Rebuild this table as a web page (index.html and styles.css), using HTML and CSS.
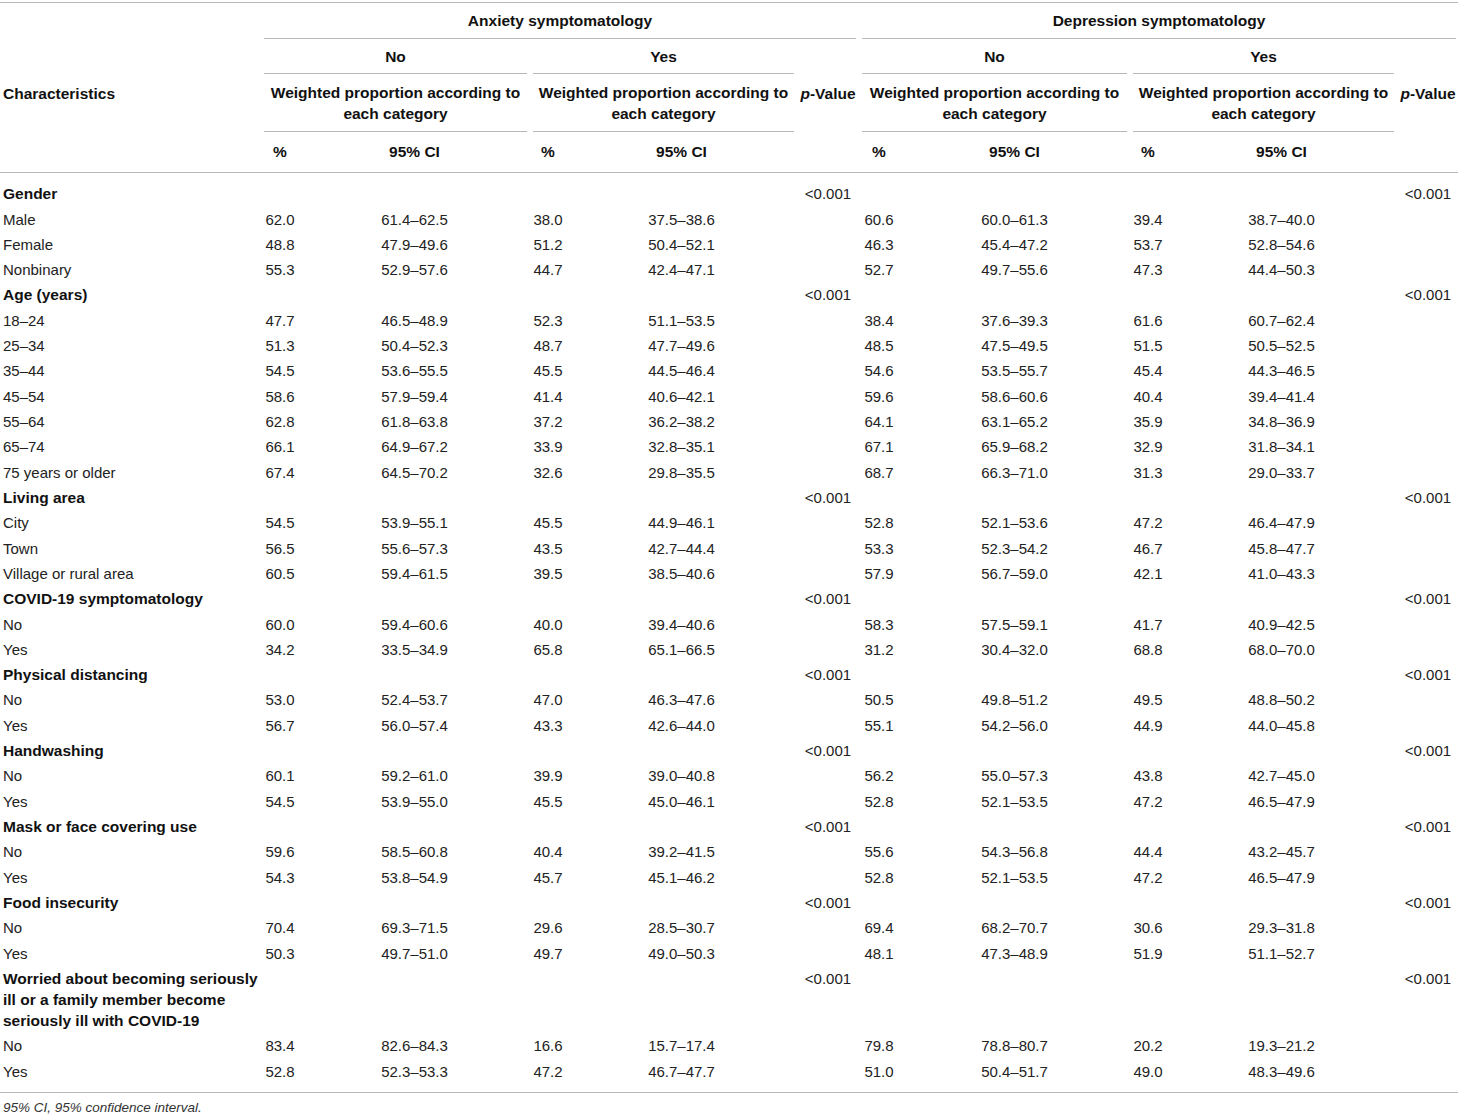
FILE: index.html
```html
<!DOCTYPE html>
<html lang="en">
<head>
<meta charset="utf-8">
<title>Table</title>
<link rel="stylesheet" href="styles.css">
</head>
<body>
<div class="wrap">
<table class="data">
<colgroup>
<col class="c-lab">
<col class="c-pct"><col class="c-ci">
<col class="c-pct2"><col class="c-ci">
<col class="c-p">
<col class="c-pct3"><col class="c-ci">
<col class="c-pct2"><col class="c-ci">
<col class="c-p">
</colgroup>
<thead>
<tr class="h1">
<th rowspan="4" class="char">Characteristics</th>
<th colspan="5" class="rule">Anxiety symptomatology</th>
<th colspan="5" class="rule">Depression symptomatology</th>
</tr>
<tr class="h2">
<th colspan="2" class="rule">No</th>
<th colspan="2" class="rule">Yes</th>
<th rowspan="3" class="pv"><i>p</i>-Value</th>
<th colspan="2" class="rule">No</th>
<th colspan="2" class="rule">Yes</th>
<th rowspan="3" class="pv"><i>p</i>-Value</th>
</tr>
<tr class="h3">
<th colspan="2" class="rule">Weighted proportion according to each category</th>
<th colspan="2" class="rule">Weighted proportion according to each category</th>
<th colspan="2" class="rule">Weighted proportion according to each category</th>
<th colspan="2" class="rule">Weighted proportion according to each category</th>
</tr>
<tr class="h4">
<th>%</th><th>95% CI</th><th>%</th><th>95% CI</th>
<th>%</th><th>95% CI</th><th>%</th><th>95% CI</th>
</tr>
</thead>
<tbody>
<tr class="grp"><td class="lab">Gender</td><td></td><td></td><td></td><td></td><td>&lt;0.001</td><td></td><td></td><td></td><td></td><td>&lt;0.001</td></tr>
<tr><td class="lab">Male</td><td>62.0</td><td>61.4–62.5</td><td>38.0</td><td>37.5–38.6</td><td></td><td>60.6</td><td>60.0–61.3</td><td>39.4</td><td>38.7–40.0</td><td></td></tr>
<tr><td class="lab">Female</td><td>48.8</td><td>47.9–49.6</td><td>51.2</td><td>50.4–52.1</td><td></td><td>46.3</td><td>45.4–47.2</td><td>53.7</td><td>52.8–54.6</td><td></td></tr>
<tr><td class="lab">Nonbinary</td><td>55.3</td><td>52.9–57.6</td><td>44.7</td><td>42.4–47.1</td><td></td><td>52.7</td><td>49.7–55.6</td><td>47.3</td><td>44.4–50.3</td><td></td></tr>
<tr class="grp"><td class="lab">Age (years)</td><td></td><td></td><td></td><td></td><td>&lt;0.001</td><td></td><td></td><td></td><td></td><td>&lt;0.001</td></tr>
<tr><td class="lab">18–24</td><td>47.7</td><td>46.5–48.9</td><td>52.3</td><td>51.1–53.5</td><td></td><td>38.4</td><td>37.6–39.3</td><td>61.6</td><td>60.7–62.4</td><td></td></tr>
<tr><td class="lab">25–34</td><td>51.3</td><td>50.4–52.3</td><td>48.7</td><td>47.7–49.6</td><td></td><td>48.5</td><td>47.5–49.5</td><td>51.5</td><td>50.5–52.5</td><td></td></tr>
<tr><td class="lab">35–44</td><td>54.5</td><td>53.6–55.5</td><td>45.5</td><td>44.5–46.4</td><td></td><td>54.6</td><td>53.5–55.7</td><td>45.4</td><td>44.3–46.5</td><td></td></tr>
<tr><td class="lab">45–54</td><td>58.6</td><td>57.9–59.4</td><td>41.4</td><td>40.6–42.1</td><td></td><td>59.6</td><td>58.6–60.6</td><td>40.4</td><td>39.4–41.4</td><td></td></tr>
<tr><td class="lab">55–64</td><td>62.8</td><td>61.8–63.8</td><td>37.2</td><td>36.2–38.2</td><td></td><td>64.1</td><td>63.1–65.2</td><td>35.9</td><td>34.8–36.9</td><td></td></tr>
<tr><td class="lab">65–74</td><td>66.1</td><td>64.9–67.2</td><td>33.9</td><td>32.8–35.1</td><td></td><td>67.1</td><td>65.9–68.2</td><td>32.9</td><td>31.8–34.1</td><td></td></tr>
<tr><td class="lab">75 years or older</td><td>67.4</td><td>64.5–70.2</td><td>32.6</td><td>29.8–35.5</td><td></td><td>68.7</td><td>66.3–71.0</td><td>31.3</td><td>29.0–33.7</td><td></td></tr>
<tr class="grp"><td class="lab">Living area</td><td></td><td></td><td></td><td></td><td>&lt;0.001</td><td></td><td></td><td></td><td></td><td>&lt;0.001</td></tr>
<tr><td class="lab">City</td><td>54.5</td><td>53.9–55.1</td><td>45.5</td><td>44.9–46.1</td><td></td><td>52.8</td><td>52.1–53.6</td><td>47.2</td><td>46.4–47.9</td><td></td></tr>
<tr><td class="lab">Town</td><td>56.5</td><td>55.6–57.3</td><td>43.5</td><td>42.7–44.4</td><td></td><td>53.3</td><td>52.3–54.2</td><td>46.7</td><td>45.8–47.7</td><td></td></tr>
<tr><td class="lab">Village or rural area</td><td>60.5</td><td>59.4–61.5</td><td>39.5</td><td>38.5–40.6</td><td></td><td>57.9</td><td>56.7–59.0</td><td>42.1</td><td>41.0–43.3</td><td></td></tr>
<tr class="grp"><td class="lab">COVID-19 symptomatology</td><td></td><td></td><td></td><td></td><td>&lt;0.001</td><td></td><td></td><td></td><td></td><td>&lt;0.001</td></tr>
<tr><td class="lab">No</td><td>60.0</td><td>59.4–60.6</td><td>40.0</td><td>39.4–40.6</td><td></td><td>58.3</td><td>57.5–59.1</td><td>41.7</td><td>40.9–42.5</td><td></td></tr>
<tr><td class="lab">Yes</td><td>34.2</td><td>33.5–34.9</td><td>65.8</td><td>65.1–66.5</td><td></td><td>31.2</td><td>30.4–32.0</td><td>68.8</td><td>68.0–70.0</td><td></td></tr>
<tr class="grp"><td class="lab">Physical distancing</td><td></td><td></td><td></td><td></td><td>&lt;0.001</td><td></td><td></td><td></td><td></td><td>&lt;0.001</td></tr>
<tr><td class="lab">No</td><td>53.0</td><td>52.4–53.7</td><td>47.0</td><td>46.3–47.6</td><td></td><td>50.5</td><td>49.8–51.2</td><td>49.5</td><td>48.8–50.2</td><td></td></tr>
<tr><td class="lab">Yes</td><td>56.7</td><td>56.0–57.4</td><td>43.3</td><td>42.6–44.0</td><td></td><td>55.1</td><td>54.2–56.0</td><td>44.9</td><td>44.0–45.8</td><td></td></tr>
<tr class="grp"><td class="lab">Handwashing</td><td></td><td></td><td></td><td></td><td>&lt;0.001</td><td></td><td></td><td></td><td></td><td>&lt;0.001</td></tr>
<tr><td class="lab">No</td><td>60.1</td><td>59.2–61.0</td><td>39.9</td><td>39.0–40.8</td><td></td><td>56.2</td><td>55.0–57.3</td><td>43.8</td><td>42.7–45.0</td><td></td></tr>
<tr><td class="lab">Yes</td><td>54.5</td><td>53.9–55.0</td><td>45.5</td><td>45.0–46.1</td><td></td><td>52.8</td><td>52.1–53.5</td><td>47.2</td><td>46.5–47.9</td><td></td></tr>
<tr class="grp"><td class="lab">Mask or face covering use</td><td></td><td></td><td></td><td></td><td>&lt;0.001</td><td></td><td></td><td></td><td></td><td>&lt;0.001</td></tr>
<tr><td class="lab">No</td><td>59.6</td><td>58.5–60.8</td><td>40.4</td><td>39.2–41.5</td><td></td><td>55.6</td><td>54.3–56.8</td><td>44.4</td><td>43.2–45.7</td><td></td></tr>
<tr><td class="lab">Yes</td><td>54.3</td><td>53.8–54.9</td><td>45.7</td><td>45.1–46.2</td><td></td><td>52.8</td><td>52.1–53.5</td><td>47.2</td><td>46.5–47.9</td><td></td></tr>
<tr class="grp"><td class="lab">Food insecurity</td><td></td><td></td><td></td><td></td><td>&lt;0.001</td><td></td><td></td><td></td><td></td><td>&lt;0.001</td></tr>
<tr><td class="lab">No</td><td>70.4</td><td>69.3–71.5</td><td>29.6</td><td>28.5–30.7</td><td></td><td>69.4</td><td>68.2–70.7</td><td>30.6</td><td>29.3–31.8</td><td></td></tr>
<tr><td class="lab">Yes</td><td>50.3</td><td>49.7–51.0</td><td>49.7</td><td>49.0–50.3</td><td></td><td>48.1</td><td>47.3–48.9</td><td>51.9</td><td>51.1–52.7</td><td></td></tr>
<tr class="grp"><td class="lab">Worried about becoming seriously<br>ill or a family member become<br>seriously ill with COVID-19</td><td></td><td></td><td></td><td></td><td>&lt;0.001</td><td></td><td></td><td></td><td></td><td>&lt;0.001</td></tr>
<tr><td class="lab">No</td><td>83.4</td><td>82.6–84.3</td><td>16.6</td><td>15.7–17.4</td><td></td><td>79.8</td><td>78.8–80.7</td><td>20.2</td><td>19.3–21.2</td><td></td></tr>
<tr><td class="lab">Yes</td><td>52.8</td><td>52.3–53.3</td><td>47.2</td><td>46.7–47.7</td><td></td><td>51.0</td><td>50.4–51.7</td><td>49.0</td><td>48.3–49.6</td><td></td></tr>
</tbody>
</table>
<p class="note">95% CI, 95% confidence interval.</p>
</div>
</body>
</html>
```

FILE: styles.css
```css
html, body {
  margin: 0;
  padding: 0;
  background: #ffffff;
}

body {
  font-family: "Liberation Sans", Arial, sans-serif;
  color: #222222;
}

.wrap {
  padding-top: 2px;
}

.data {
  border-collapse: collapse;
  table-layout: fixed;
  width: 1458px;
  border-top: 1px solid #b8b8b8;
  border-bottom: 1px solid #b8b8b8;
  font-size: 15px;
  line-height: 21px;
}

.c-lab { width: 261px; }
.c-pct { width: 38px; }
.c-pct2 { width: 36px; }
.c-pct3 { width: 40px; }
.c-ci { width: 231px; }
.c-p { width: 62px; }

.data thead {
  border-bottom: 1px solid #b8b8b8;
}

.data th {
  font-weight: bold;
  font-size: 15.5px;
  color: #111111;
  text-align: center;
  vertical-align: middle;
  padding: 7px 3px;
}

.data .h1 th { padding: 7px 3px 8px; }
.data .h3 th { padding: 8px 3px; }
.data .h4 th { padding: 9px 3px 10px; }

.data th.rule {
  background: linear-gradient(#b8b8b8, #b8b8b8) 3px 100% / calc(100% - 6px) 1px no-repeat;
}

.data th.char {
  text-align: left;
  padding: 11px 3px 0;
}

.data th.pv {
  padding: 0 0 25px;
  white-space: nowrap;
}

.data td {
  padding: 2.17px 3px 2.17px;
  text-align: center;
  vertical-align: top;
  white-space: nowrap;
}

.data td.lab {
  text-align: left;
}

.data tr.grp td.lab {
  font-weight: bold;
  font-size: 15.5px;
  color: #111111;
}

.data tbody tr:first-child td {
  padding-top: 10.2px;
}

.data tbody tr:last-child td {
  padding-bottom: 10.5px;
}

.note {
  margin: 0;
  padding: 6px 3px;
  font-style: italic;
  font-size: 13.5px;
  line-height: 18px;
  color: #333333;
}
```
